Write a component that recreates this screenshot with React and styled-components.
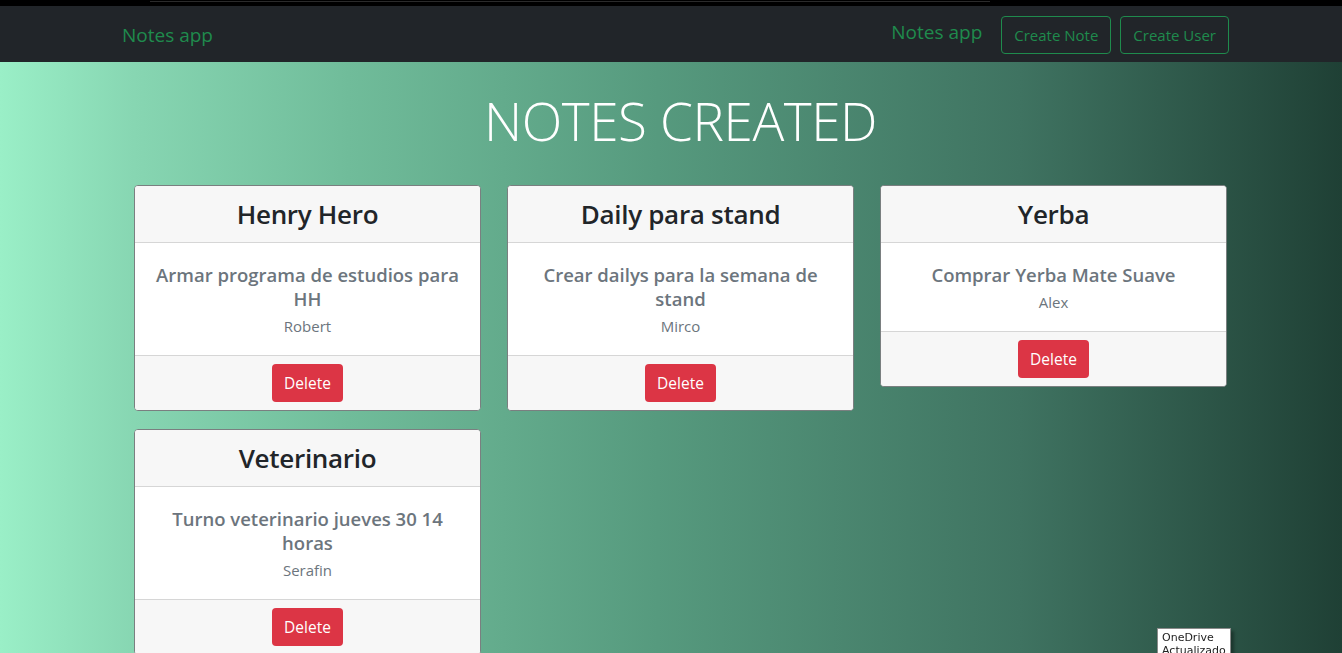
import React from 'react';
import styled, { createGlobalStyle } from 'styled-components';

const GlobalStyle = createGlobalStyle`
  html, body {
    margin: 0;
    padding: 0;
  }
  body {
    font-family: "Open Sans", "Noto Sans", sans-serif;
    background: #1f4035;
    overflow: hidden;
  }
  * {
    box-sizing: border-box;
  }
`;

const colors = {
  green: '#1f8b4d',
  dark: '#212529',
  muted: '#6c757d',
  light: '#f7f7f7',
  danger: '#dc3545',
};

const TopStrip = styled.div`
  height: 6px;
  background: #000;
  border-top: 1px solid #000;
  &::after {
    content: '';
    display: block;
    margin-left: 150px;
    width: 840px;
    height: 1px;
    background: #2b2b2b;
  }
`;

const Navbar = styled.nav`
  height: 56px;
  background: ${colors.dark};
  display: flex;
  align-items: center;
  justify-content: space-between;
  padding: 0 113px 0 122px;
`;

const Brand = styled.a`
  color: ${colors.green};
  font-size: 19px;
  line-height: 1;
  text-decoration: none;
  margin-top: ${(p) => (p.$raised ? '-4px' : '2px')};
`;

const NavRight = styled.div`
  display: flex;
  align-items: center;
  gap: 9px;
`;

const OutlineButton = styled.button`
  height: 38px;
  padding: 0 12px;
  background: transparent;
  border: 1px solid ${colors.green};
  border-radius: 4px;
  color: ${colors.green};
  font-family: inherit;
  font-size: 15px;
  cursor: pointer;
  margin-top: 2px;
  margin-left: ${(p) => (p.$first ? '10px' : '0')};
`;

const Main = styled.main`
  min-height: 600px;
  background: linear-gradient(
    to right,
    #9aefc7 0%,
    #87d6b2 10%,
    #70bc9a 26%,
    #569a7e 49%,
    #3f7361 76%,
    #1f4035 100%
  );
  padding: 28px 115px 0 134px;
  display: flex;
  flex-direction: column;
  align-items: center;
`;

const Title = styled.h1`
  margin: 0 0 33px;
  color: #fff;
  font-size: 53px;
  font-weight: 300;
  line-height: 62px;
  letter-spacing: -0.4px;
`;

const Grid = styled.div`
  display: grid;
  grid-template-columns: repeat(3, 347px);
  column-gap: 26px;
  row-gap: 18px;
  align-items: start;
`;

const Card = styled.div`
  background: #fff;
  border: 1px solid #7a7f80;
  border-radius: 4px;
  overflow: hidden;
  text-align: center;
`;

const CardHeader = styled.div`
  background: ${colors.light};
  border-bottom: 1px solid #d6d6d6;
  padding: 12px 20px;
`;

const CardTitle = styled.h3`
  margin: 0;
  font-size: 26px;
  font-weight: 600;
  line-height: 32px;
  letter-spacing: -0.3px;
  color: ${colors.dark};
`;

const CardBody = styled.div`
  padding: 20px 14px;
`;

const NoteText = styled.h5`
  margin: 0 0 7px;
  font-size: 18.5px;
  font-weight: 600;
  line-height: 24px;
  color: ${colors.muted};
`;

const Author = styled.p`
  margin: 0;
  font-size: 15px;
  line-height: 17px;
  color: ${colors.muted};
`;

const CardFooter = styled.div`
  background: ${colors.light};
  border-top: 1px solid #d6d6d6;
  padding: 8px 20px;
`;

const DeleteButton = styled.button`
  height: 38px;
  padding: 0 12.5px;
  background: ${colors.danger};
  border: none;
  border-radius: 4px;
  color: #fff;
  font-family: inherit;
  font-size: 15.5px;
  cursor: pointer;
`;

const SystemToast = styled.div`
  position: fixed;
  left: 1157px;
  top: 628px;
  width: 74px;
  padding: 2px 4px;
  background: #fff;
  border: 1px solid #8a8a8a;
  box-shadow: 3px 3px 3px rgba(0, 0, 0, 0.35);
  font-family: "DejaVu Sans", sans-serif;
  font-size: 11px;
  line-height: 13px;
  color: #222;
`;

const notes = [
  { title: 'Henry Hero', content: 'Armar programa de estudios para HH', author: 'Robert' },
  { title: 'Daily para stand', content: 'Crear dailys para la semana de stand', author: 'Mirco' },
  { title: 'Yerba', content: 'Comprar Yerba Mate Suave', author: 'Alex' },
  { title: 'Veterinario', content: 'Turno veterinario jueves 30 14 horas', author: 'Serafin' },
];

const App = () => {
  return (
    <>
      <GlobalStyle />
      <TopStrip />
      <Navbar>
        <Brand href="#">Notes app</Brand>
        <NavRight>
          <Brand href="#" $raised>Notes app</Brand>
          <OutlineButton $first>Create Note</OutlineButton>
          <OutlineButton>Create User</OutlineButton>
        </NavRight>
      </Navbar>
      <Main>
        <Title>NOTES CREATED</Title>
        <Grid>
          {notes.map((note) => (
            <Card key={note.title}>
              <CardHeader>
                <CardTitle>{note.title}</CardTitle>
              </CardHeader>
              <CardBody>
                <NoteText>{note.content}</NoteText>
                <Author>{note.author}</Author>
              </CardBody>
              <CardFooter>
                <DeleteButton>Delete</DeleteButton>
              </CardFooter>
            </Card>
          ))}
        </Grid>
      </Main>
      <SystemToast>
        OneDrive
        <br />
        Actualizado
      </SystemToast>
    </>
  );
};

export default App;
